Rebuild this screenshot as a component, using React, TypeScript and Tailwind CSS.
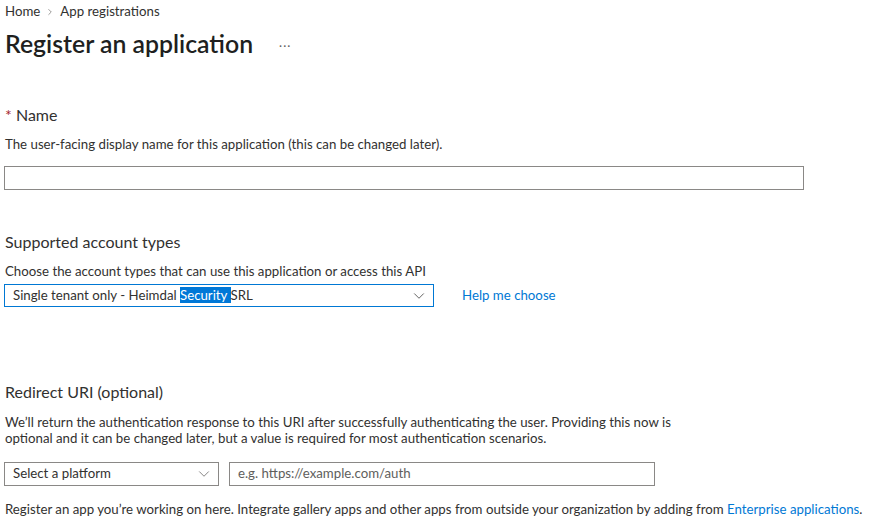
import { ChevronDown, ChevronRight } from 'lucide-react';

const font = { fontFamily: 'Lato, "Liberation Sans", sans-serif' };

export default function App() {
  return (
    <div className="h-[528px] w-[871px] overflow-hidden bg-white text-[#323130]" style={font}>
      <div className="px-[5px] pt-[3px]">
        <div className="flex h-[17px] items-center text-[13.25px]">
          <span>Home</span>
          <ChevronRight size={10} strokeWidth={1.5} className="mx-[5px] text-[#605e5c]" />
          <span>App registrations</span>
        </div>
        <div className="mt-[11px] flex h-[26px] items-center">
          <h1 className="text-[24.8px] font-semibold leading-[26px] text-[#201f1e]">Register an application</h1>
          <span className="ml-[26px] mt-[-2px] text-[13px] tracking-[1px] text-[#605e5c]">...</span>
        </div>

        <div className="mt-[48px] text-[16px] leading-[20px]">
          <span className="text-[#a4262c]">*</span> Name
        </div>
        <div className="mt-[10px] text-[13.25px] leading-[18px]">
          The user-facing display name for this application (this can be changed later).
        </div>
        <div className="ml-[-1px] mt-[13px] h-[24px] w-[800px] border border-[#8a8886] bg-white" />

        <div className="mt-[42px] text-[16px] leading-[20px]">Supported account types</div>
        <div className="mt-[10px] text-[13.25px] leading-[18px]">
          Choose the account types that can use this application or access this API
        </div>
        <div className="mt-[4px] flex items-center">
          <div className="ml-[-1px] flex h-[23px] w-[430px] items-center justify-between border border-[#0078d4] pl-[8px] pr-[5px] text-[13.25px]">
            <span>
              Single tenant only - Heimdal <span className="bg-[#0078d7] text-white">Security </span>SRL
            </span>
            <ChevronDown size={18} strokeWidth={1} className="text-[#323130]" />
          </div>
          <a className="ml-[28px] text-[13.25px] text-[#0078d4]">Help me choose</a>
        </div>

        <div className="mt-[75px] text-[16px] leading-[20px]">Redirect URI (optional)</div>
        <div className="mt-[12px] w-[672px] text-[13.25px] leading-[16px]">
          We’ll return the authentication response to this URI after successfully authenticating the user. Providing this now is optional and it can be changed later, but a value is required for most authentication scenarios.
        </div>
        <div className="mt-[16px] flex items-center gap-[10px]">
          <div className="ml-[-1px] flex h-[24px] w-[215px] items-center justify-between border border-[#8a8886] pl-[8px] pr-[5px] text-[13.25px]">
            <span>Select a platform</span>
            <ChevronDown size={18} strokeWidth={1} className="text-[#605e5c]" />
          </div>
          <div className="flex h-[24px] w-[426px] items-center border border-[#8a8886] pl-[8px] text-[13.25px] text-[#605e5c]">
            e.g. https://example.com/auth
          </div>
        </div>
        <div className="mt-[14px] text-[13.25px] leading-[18px]">
          Register an app you’re working on here. Integrate gallery apps and other apps from outside your organization by adding from{' '}
          <a className="text-[#0078d4]">Enterprise applications</a>.
        </div>
      </div>
    </div>
  );
}
